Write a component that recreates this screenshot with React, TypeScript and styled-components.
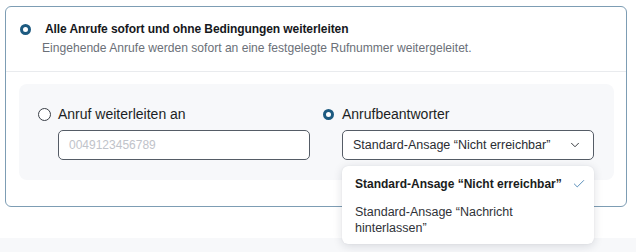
import React from "react";
import styled, { createGlobalStyle } from "styled-components";
import { ChevronDown, Check } from "lucide-react";

const GlobalStyle = createGlobalStyle`
  html, body { margin: 0; padding: 0; background: #ffffff; }
  body { font-family: "Liberation Sans", Arial, sans-serif; color: #1c1f24; }
  * { box-sizing: border-box; }
`;

const Page = styled.div`
  width: 636px;
  height: 252px;
  overflow: hidden;
  display: flex;
  flex-direction: column;
`;

const CardWrap = styled.div`
  padding: 6px 9px 0 5px;
`;

const Card = styled.div`
  border: 1px solid #7d9db4;
  border-radius: 6px;
  background: #fff;
  position: relative;
`;

const Header = styled.div`
  padding: 13px 14px 14px 14px;
  border-bottom: 1px solid #e9ebee;
`;

const TitleRow = styled.div`
  display: flex;
  align-items: center;
  gap: 14px;
  height: 18px;
`;

const Title = styled.div`
  font-size: 12px;
  font-weight: 700;
  letter-spacing: -0.08px;
  color: #16181c;
  line-height: 18px;
`;

const Subtitle = styled.div`
  margin-top: 1px;
  padding-left: 22px;
  font-size: 12.1px;
  line-height: 18px;
  color: #6b7078;
`;

const Body = styled.div`
  padding: 12px 12px 26px 13px;
`;

const Panel = styled.div`
  background: #f7f8fa;
  border-radius: 8px;
  padding: 20px;
  display: grid;
  grid-template-columns: 1fr 1fr;
  column-gap: 13px;
`;

const Option = styled.div`
  display: flex;
  flex-direction: column;
  gap: 6px;
  position: relative;
`;

const OptionLabel = styled.label`
  display: flex;
  align-items: center;
  gap: 8px;
  height: 20px;
  font-size: 14px;
  color: #1c1f24;
`;

const Radio = styled.span<{ $checked?: boolean }>`
  flex: none;
  width: ${(p) => (p.$checked ? "11px" : "13px")};
  height: ${(p) => (p.$checked ? "11px" : "13px")};
  margin: ${(p) => (p.$checked ? "0" : "0 -1px")};
  border-radius: 50%;
  background: #fff;
  border: ${(p) => (p.$checked ? "3.5px solid #1d5a80" : "1px solid #3a3f47")};
`;

const Field = styled.div`
  margin-left: 19px;
  height: 30px;
  border: 1px solid #555c66;
  border-radius: 5px;
  background: #fff;
  display: flex;
  align-items: center;
  padding: 0 11px 0 10px;
  font-size: 12px;
`;

const Placeholder = styled.span`
  color: #bfc3ca;
`;

const SelectText = styled.span`
  flex: 1;
  font-size: 12.5px;
  color: #2a2d33;
`;

const Menu = styled.div`
  position: absolute;
  top: 62px;
  left: 19px;
  right: 0;
  background: #fff;
  border-radius: 6px;
  box-shadow: 0 2px 10px rgba(20, 30, 50, 0.14), 0 0 1px rgba(20, 30, 50, 0.12);
  padding: 4px 0;
  z-index: 10;
`;

const MenuItem = styled.div<{ $selected?: boolean }>`
  display: grid;
  grid-template-columns: 1fr 14px;
  column-gap: 4px;
  align-items: center;
  padding: ${(p) => (p.$selected ? "5px 8px 5px 13px" : "6px 8px 4px 13px")};
  font-size: ${(p) => (p.$selected ? "12px" : "12.5px")};
  font-weight: ${(p) => (p.$selected ? 700 : 400)};
  line-height: ${(p) => (p.$selected ? "18px" : "16px")};
  color: ${(p) => (p.$selected ? "#1a1c20" : "#2f3238")};
`;

const Footer = styled.div`
  margin-top: 31px;
  flex: 1;
  background: #f7f8fa;
`;

export default function App() {
  return (
    <Page>
      <GlobalStyle />
      <CardWrap>
        <Card>
          <Header>
            <TitleRow>
              <Radio $checked />
              <Title>Alle Anrufe sofort und ohne Bedingungen weiterleiten</Title>
            </TitleRow>
            <Subtitle>
              Eingehende Anrufe werden sofort an eine festgelegte Rufnummer weitergeleitet.
            </Subtitle>
          </Header>
          <Body>
            <Panel>
              <Option>
                <OptionLabel>
                  <Radio />
                  Anruf weiterleiten an
                </OptionLabel>
                <Field>
                  <Placeholder>0049123456789</Placeholder>
                </Field>
              </Option>
              <Option>
                <OptionLabel>
                  <Radio $checked />
                  Anrufbeantworter
                </OptionLabel>
                <Field>
                  <SelectText>Standard-Ansage “Nicht erreichbar”</SelectText>
                  <ChevronDown size={14} strokeWidth={1.6} color="#2a2d33" />
                </Field>
                <Menu>
                  <MenuItem $selected>
                    <span>Standard-Ansage “Nicht erreichbar”</span>
                    <Check size={14} strokeWidth={1.6} color="#4f86b5" />
                  </MenuItem>
                  <MenuItem>
                    <span>Standard-Ansage “Nachricht hinterlassen”</span>
                    <span />
                  </MenuItem>
                </Menu>
              </Option>
            </Panel>
          </Body>
        </Card>
      </CardWrap>
      <Footer />
    </Page>
  );
}
